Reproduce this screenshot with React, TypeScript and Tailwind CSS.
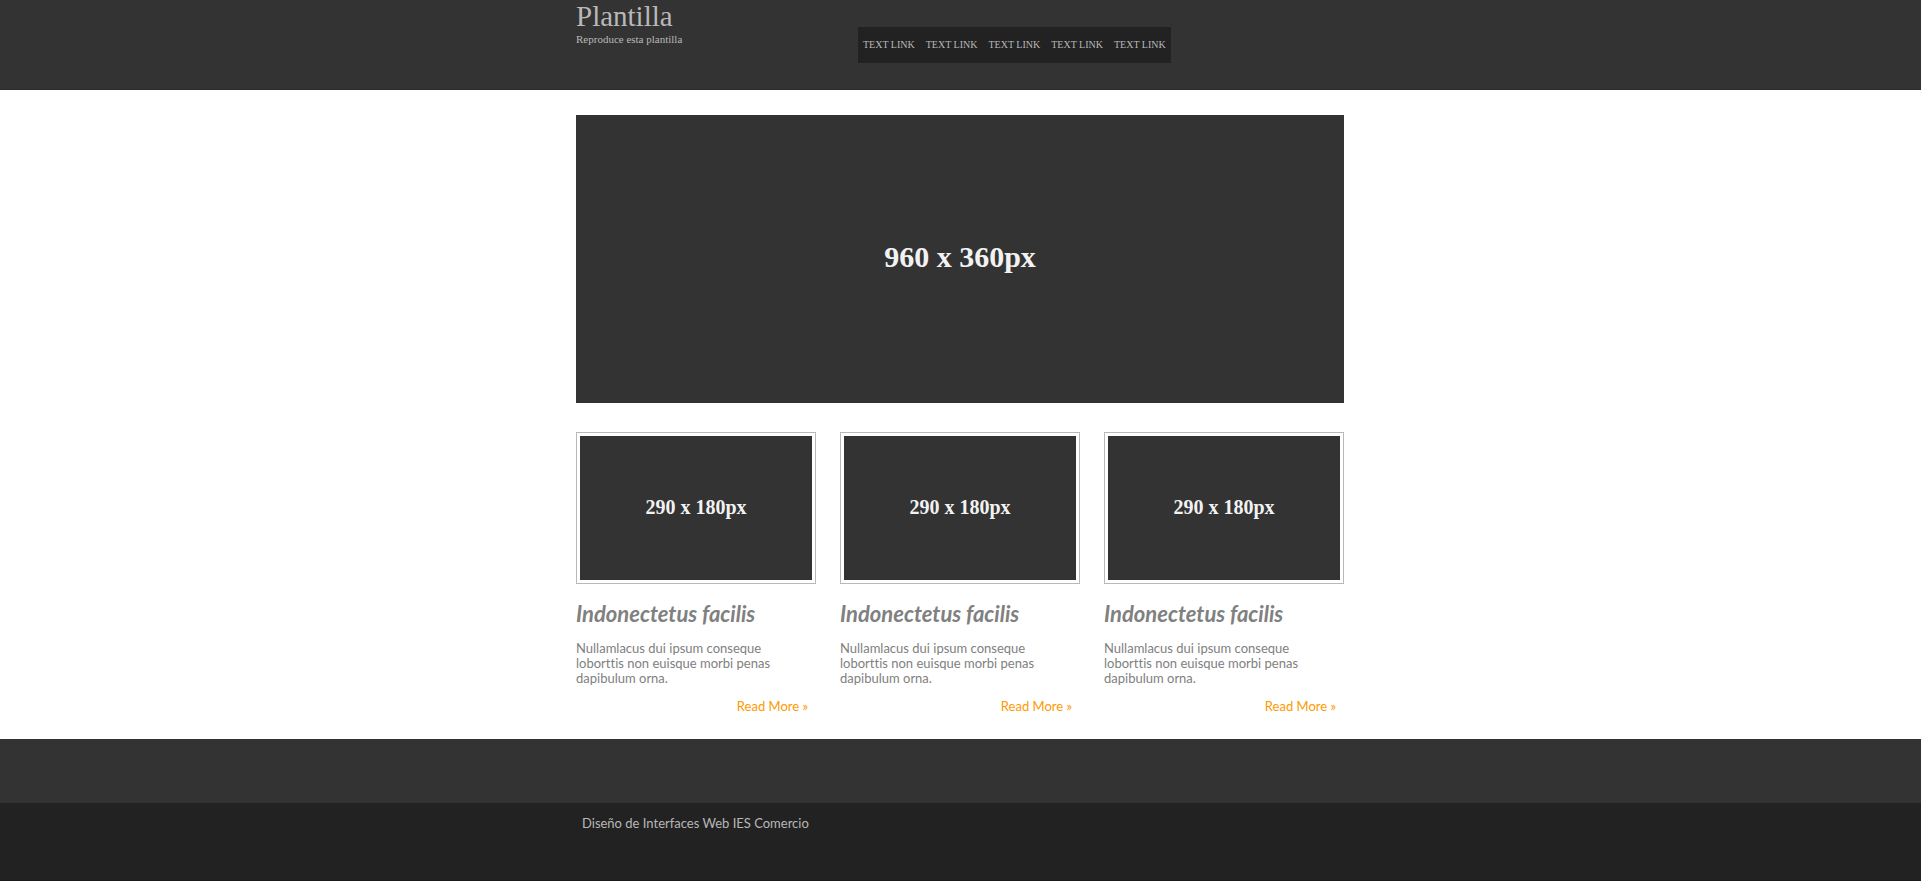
const links = [1, 2, 3, 4, 5];
const articles = [1, 2, 3];

export default function App() {
  return (
    <div className="bg-white font-['Lato',sans-serif] text-[13px] leading-[15px] text-[#808080] [font-variant-ligatures:none]">
      <header className="h-[90px] border-b border-[#2b2b2b] bg-[#333333] font-['Liberation_Serif',serif] text-[#b8b8b8]">
        <div className="mx-auto flex w-full max-w-[769px]">
          <div className="w-[282px]">
            <h1 className="text-[29px] leading-[33px]">Plantilla</h1>
            <p className="text-[11px] leading-[13px]">Reproduce esta plantilla</p>
          </div>
          <nav className="mt-[27px] h-9 bg-[#222222]">
            <ul className="flex gap-px text-[10px] leading-[36px]">
              {links.map((n) => (
                <li key={n} className="px-[5px]">
                  <a href="#">TEXT LINK</a>
                </li>
              ))}
            </ul>
          </nav>
        </div>
      </header>

      <main className="mx-auto w-full max-w-[769px] pt-[25px] pr-px pb-[25px]">
        <div className="flex h-72 items-center justify-center bg-[#333333] pb-1.5 font-['Liberation_Serif',serif] text-[30px] font-bold text-[#f2f2f2]">
          960 x 360px
        </div>
        <div className="mt-[29px] grid grid-cols-3 gap-6">
          {articles.map((n) => (
            <article key={n}>
              <div className="border border-[#b8b8b8] p-[3px]">
                <div className="flex h-36 items-center justify-center bg-[#333333] pb-0.5 font-['Liberation_Serif',serif] text-[20px] font-bold text-[#f2f2f2]">
                  290 x 180px
                </div>
              </div>
              <h2 className="mt-[18px] text-[22px] leading-6 font-bold italic">Indonectetus facilis</h2>
              <p className="mt-[15px] pr-8">Nullamlacus dui ipsum conseque loborttis non euisque morbi penas dapibulum orna.</p>
              <p className="mt-[13px] pr-2 text-right text-[#ff9900]">
                <a href="#">Read More »</a>
              </p>
            </article>
          ))}
        </div>
      </main>

      <div className="h-16 bg-[#333333]" />
      <footer className="h-[78px] border-b border-[#1e1a1c] bg-[#222222] text-[#b8b8b8]">
        <p className="mx-auto w-full max-w-[769px] px-1.5 pt-[13px]">Diseño de Interfaces Web IES Comercio</p>
      </footer>
    </div>
  );
}
